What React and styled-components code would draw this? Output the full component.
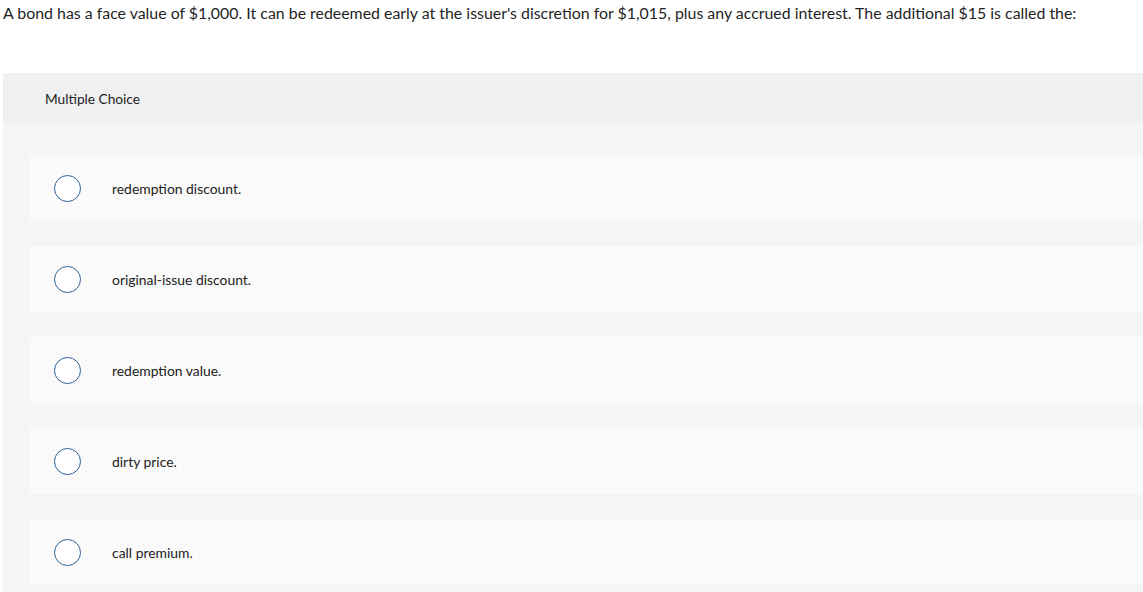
import styled, { createGlobalStyle } from "styled-components";

const GlobalStyle = createGlobalStyle`
  body {
    margin: 0;
    background: #ffffff;
    font-family: "Lato", "Liberation Sans", sans-serif;
    color: #222;
  }
`;

const Page = styled.div`
  padding: 4px 0 0 3px;
  overflow: hidden;
`;

const Question = styled.p`
  margin: 0;
  font-size: 15.9px;
  line-height: 18px;
  color: #1f1f1f;
  white-space: nowrap;
`;

const Panel = styled.div`
  margin-top: 51px;
  width: 1150px;
  background: #f5f5f5;
  padding-bottom: 8px;
`;

const PanelHeader = styled.div`
  height: 50px;
  display: flex;
  align-items: center;
  padding-left: 42px;
  background: #f0f0f0;
  font-size: 13.7px;
  color: #222;
`;

const OptionList = styled.div`
  display: flex;
  flex-direction: column;
  gap: 25px;
  padding: 32px 0 0 26px;
`;

const Option = styled.label`
  height: 66px;
  display: flex;
  align-items: center;
  background: #fafafa;
  border-radius: 3px;
  padding-left: 25px;
  font-size: 13.9px;
  color: #222;
  cursor: pointer;
`;

const Radio = styled.span`
  width: 25px;
  height: 25px;
  border: 1.5px solid #2c5f91;
  border-radius: 50%;
  background: #fff;
  flex-shrink: 0;
  margin-right: 31px;
`;

const options = [
  "redemption discount.",
  "original-issue discount.",
  "redemption value.",
  "dirty price.",
  "call premium.",
];

export default function App() {
  return (
    <Page>
      <GlobalStyle />
      <Question>
        A bond has a face value of $1,000. It can be redeemed early at the issuer's discretion for $1,015, plus any accrued interest. The additional $15 is called the:
      </Question>
      <Panel>
        <PanelHeader>Multiple Choice</PanelHeader>
        <OptionList>
          {options.map((o) => (
            <Option key={o}>
              <Radio />
              {o}
            </Option>
          ))}
        </OptionList>
      </Panel>
    </Page>
  );
}
